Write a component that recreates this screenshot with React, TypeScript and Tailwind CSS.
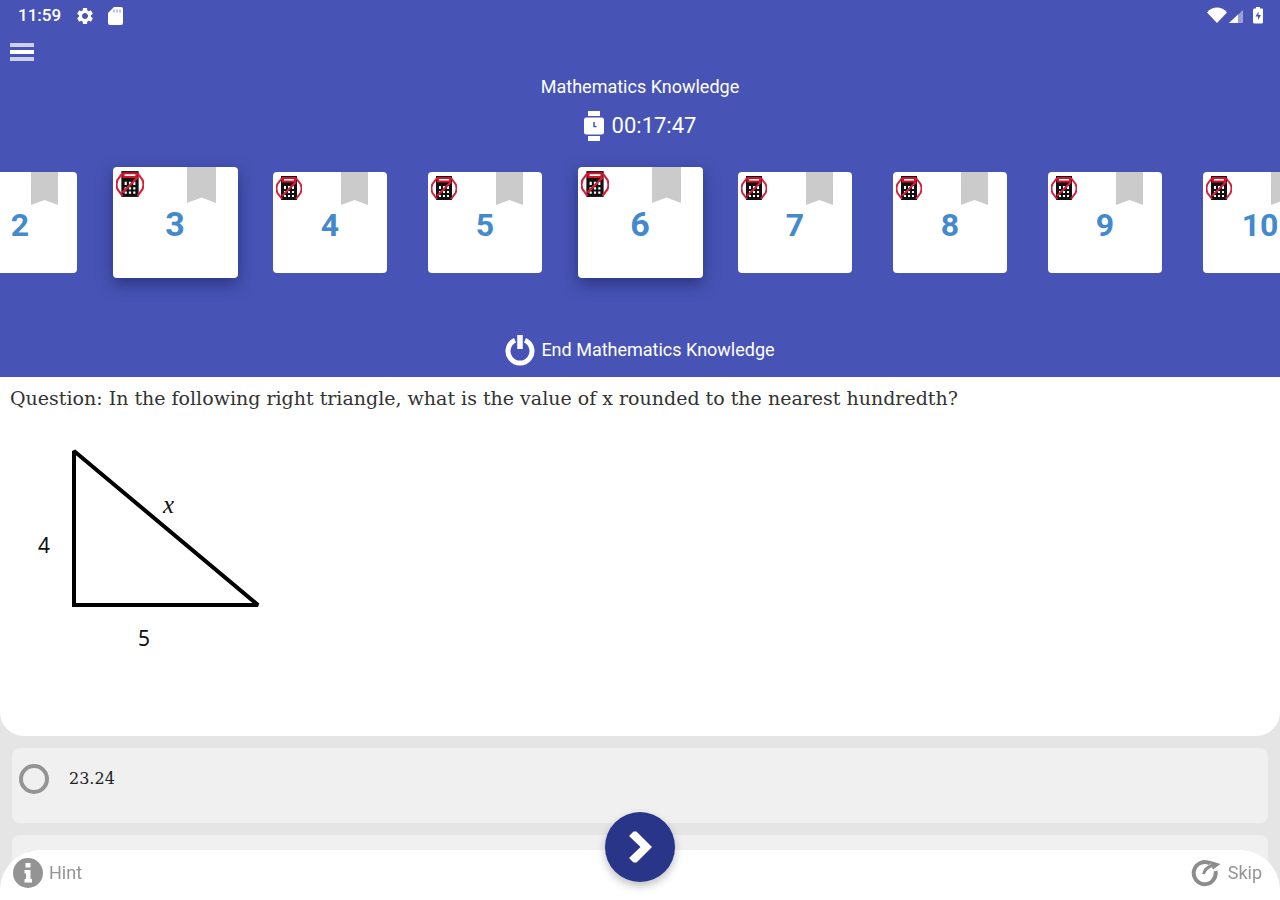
import { useState } from "react";
import clsx from "clsx";

const QUESTIONS = [2, 3, 4, 5, 6, 7, 8, 9, 10];
const RAISED = [3, 6];

const ANSWERS = [
  { id: "a", label: "23.24", visible: true },
  { id: "b", label: "6.40", visible: false },
];

function StatusIcons() {
  return (
    <svg width="56" height="20" viewBox="0 0 56 20" fill="#fff" aria-hidden="true">
      <path d="M0 6.500C5-.2 15-.2 20 6.500L10 17Z" />
      <path d="M22 17 36 4V17Z" opacity=".45" />
      <path d="M22 17 31 8.500V17Z" />
      <path
        fillRule="evenodd"
        d="M49 1h4v1.500h2q1.500 0 1 1.500v12q0 1.500-1.500 1.500h-7q-1.500 0-1.500-1.500v-12q0-1.500 1.500-1.500H49ZM51.500 5.500 48.500 10.500H51V14l3-5H51.500Z"
      />
    </svg>
  );
}

function SettingsIcon() {
  return (
    <svg width="20" height="20" viewBox="0 0 24 24" fill="#fff" aria-hidden="true">
      <path d="M19.140 12.940c.04-.3.06-.61.06-.94 0-.32-.02-.64-.07-.94l2.030-1.580c.18-.14.23-.41.12-.61l-1.920-3.320c-.12-.22-.37-.29-.59-.22l-2.390.96c-.5-.38-1.030-.7-1.620-.94l-.36-2.540c-.04-.24-.24-.41-.48-.41h-3.840c-.24 0-.43.17-.47.41l-.36 2.540c-.59.24-1.130.57-1.620.94l-2.390-.96c-.22-.08-.47 0-.59.22L2.740 8.870c-.12.21-.08.47.12.61l2.030 1.580c-.05.3-.09.63-.09.94s.02.64.07.94l-2.030 1.580c-.18.14-.23.41-.12.61l1.920 3.320c.12.22.37.29.59.22l2.390-.96c.5.38 1.030.7 1.620.94l.36 2.540c.05.24.24.41.48.41h3.840c.24 0 .44-.17.47-.41l.36-2.540c.59-.24 1.130-.56 1.620-.94l2.390.96c.22.08.47 0 .59-.22l1.920-3.320c.12-.22.07-.47-.12-.61l-2.010-1.580ZM12 15.600c-1.980 0-3.600-1.620-3.600-3.600s1.620-3.600 3.600-3.600 3.600 1.620 3.600 3.600-1.620 3.600-3.600 3.600Z" />
    </svg>
  );
}

function SdCardIcon() {
  return (
    <svg width="16" height="20" viewBox="0 0 16 20" aria-hidden="true">
      <path d="M6 1h7q2 0 2 2v14q0 2-2 2H2q-2 0-2-2V7Z" fill="#fff" />
      <path d="M6 3.500v3M9 3.500v3M12 3.500v3" stroke="#a9afdd" strokeWidth="1.500" />
    </svg>
  );
}

function WatchIcon() {
  return (
    <svg width="20" height="30" viewBox="0 0 20 30" aria-hidden="true">
      <path d="M4 0h12v5H4ZM4 25h12v5H4Z" fill="#fff" />
      <rect x="0" y="6.500" width="20" height="17" rx="2.500" fill="#fff" />
      <path d="M10 11v4.500h2.500" fill="none" stroke="#4754b5" strokeWidth="1.500" />
    </svg>
  );
}

function PowerIcon() {
  return (
    <svg width="30" height="32" viewBox="0 0 30 32" fill="none" stroke="#fff" aria-hidden="true">
      <path d="M10 6.200A12 12 0 1 0 20 6.200" strokeWidth="5" />
      <path d="M15 1v14" strokeWidth="5.500" />
    </svg>
  );
}

function NoCalculatorIcon({ className }: { className: string }) {
  return (
    <svg className={className} viewBox="0 0 26 26" aria-hidden="true">
      <path d="M5 1h16v24H5Z" fill="#111" />
      <path d="M7 3h12v3.500H7Z" fill="#fff" stroke="#d4142c" strokeWidth="2" />
      <path
        d="M8 11h2v3H8ZM12 11h2v3h-2ZM16 11h2v3h-2ZM8 16h2v2H8ZM12 16h2v2h-2ZM16 16h2v2h-2ZM8 20h2v2H8ZM12 20h2v2h-2ZM16 20h2v2h-2Z"
        fill="#fff"
      />
      <path
        d="M6 3 1.500 9Q-.5 13.500 1.500 18L6 24M20 3 24.500 9Q26.500 13.500 24.500 18L20 24M20 7 6 21"
        fill="none"
        stroke="#d4203a"
        strokeWidth="2"
      />
    </svg>
  );
}

function Ribbon({ className }: { className: string }) {
  return (
    <svg className={className} viewBox="0 0 27 33" preserveAspectRatio="none" aria-hidden="true">
      <path d="M0 0h27v33L13.500 28 0 33Z" fill="#cbcbcb" />
    </svg>
  );
}

function QuestionCard({ number, raised }: { number: number; raised: boolean }) {
  return (
    <li className="flex w-[155px] shrink-0 items-center justify-center">
      <button
        type="button"
        className={clsx(
          "relative flex items-center justify-center rounded-[4px] bg-white font-bold text-[#4489cd]",
          raised
            ? "h-[111px] w-[125px] text-[34px] shadow-[0_6px_16px_rgba(20,25,90,0.55)]"
            : "h-[101px] w-[114px] text-[32px]",
        )}
      >
        <NoCalculatorIcon
          className={clsx("absolute top-[3px] left-[3px]", raised ? "size-7" : "size-[26px]")}
        />
        <Ribbon
          className={clsx(
            "absolute top-0",
            raised ? "right-[22px] h-9 w-[29px]" : "right-[19px] h-[33px] w-[27px]",
          )}
        />
        <span className="mt-1">{number}</span>
      </button>
    </li>
  );
}

function Triangle() {
  return (
    <svg
      width="280"
      height="240"
      viewBox="0 0 280 240"
      role="img"
      aria-label="Right triangle with legs 4 and 5 and hypotenuse x"
      className="font-['Noto_Sans']"
    >
      <path d="M64 23V177H248Z" fill="none" stroke="#000" strokeWidth="4" strokeLinejoin="miter" strokeMiterlimit="1.500" />
      <text x="28" y="125" fontSize="21" fill="#111">4</text>
      <text x="128" y="218" fontSize="21" fill="#111">5</text>
      <text x="153" y="85" fontSize="25" fill="#111" fontStyle="italic" fontFamily="Liberation Serif, serif">x</text>
    </svg>
  );
}

export default function App() {
  const [answer, setAnswer] = useState<string | null>(null);

  return (
    <div className="flex h-screen flex-col overflow-hidden bg-[#e5e5e5] font-['Roboto',sans-serif]">
      <header className="bg-[#4754b5] text-white">
        <div className="flex h-8 items-center justify-between pr-[17px] pl-[18px]">
          <div className="flex items-center">
            <span className="text-[17px] font-medium">11:59</span>
            <span className="ml-[14px] flex items-center gap-[13px]">
              <SettingsIcon />
              <SdCardIcon />
            </span>
          </div>
          <StatusIcons />
        </div>

        <button type="button" aria-label="Menu" className="mx-[10px] mt-[11px] mb-[14px] flex flex-col gap-[3px]">
          <span className="h-1 w-6 bg-[#cdd0eb]" />
          <span className="h-1 w-6 bg-white" />
          <span className="h-1 w-6 bg-[#cdd0eb]" />
        </button>

        <div className="flex flex-col items-center">
          <h1 className="text-[18px] leading-6">Mathematics Knowledge</h1>
          <p className="mt-3 flex items-center gap-2 text-[22px] leading-[30px]">
            <WatchIcon />
            00:17:47
          </p>
        </div>

        <div className="h-[172px] overflow-hidden pt-[26px]">
          <ul className="flex h-[111px] justify-center">
            {QUESTIONS.map((n) => (
              <QuestionCard key={n} number={n} raised={RAISED.includes(n)} />
            ))}
          </ul>
        </div>

        <div className="flex justify-center pt-[21px] pb-[11px]">
          <button type="button" className="flex items-center gap-[6px] text-[18px] leading-8">
            <PowerIcon />
            End Mathematics Knowledge
          </button>
        </div>
      </header>

      <section className="rounded-b-[24px] bg-white px-[10px] pt-[7px] pb-[68px]">
        <h2 className="font-['DejaVu_Serif',serif] text-[19px] leading-7 text-[#333]">
          Question: In the following right triangle, what is the value of x rounded to the nearest
          hundredth?
        </h2>
        <div className="pt-4">
          <Triangle />
        </div>
      </section>

      <form className="flex flex-1 flex-col gap-3 overflow-hidden px-3 pt-3">
        {ANSWERS.map((a) => (
          <label
            key={a.id}
            className="flex h-[75px] shrink-0 items-start gap-5 rounded-lg bg-[#f0f0f0] px-[7px] pt-4"
          >
            <input
              type="radio"
              name="answer"
              aria-label={a.label}
              checked={answer === a.id}
              onChange={() => setAnswer(a.id)}
              className="size-[30px] appearance-none rounded-full border-4 border-[#949494] checked:bg-[#283588]"
            />
            {a.visible && (
              <span className="font-['DejaVu_Serif',serif] text-[16px] leading-[30px] text-[#222]">
                {a.label}
              </span>
            )}
          </label>
        ))}
      </form>

      <footer className="fixed inset-x-0 bottom-0 flex h-[50px] items-center justify-between rounded-t-[40px] bg-white pr-[18px] pb-[5px] pl-[13px] text-[18px] text-[#949494]">
        <button type="button" className="flex items-center gap-[6px]">
          <svg width="30" height="30" viewBox="0 0 30 30" aria-hidden="true">
            <circle cx="15" cy="15" r="15" fill="#949494" />
            <path d="M12.500 5h5v4.500h-5ZM11.500 12H17.500v9h1.500v3.500h-7.500V21h1.500v-5.500h-1.500Z" fill="#fff" />
          </svg>
          Hint
        </button>
        <button
          type="button"
          aria-label="Next question"
          className="absolute bottom-[18px] left-1/2 flex size-[70px] -translate-x-1/2 items-center justify-center rounded-full bg-[#283588] shadow-[0_4px_8px_rgba(0,0,0,0.25)]"
        >
          <svg width="26" height="34" viewBox="0 0 26 34" fill="none" aria-hidden="true">
            <path d="M2 6 6.500 1.500H9.500L25 17 9.500 32.500H6.500L2 28 13.500 17Z" fill="#fff" />
          </svg>
        </button>
        <button type="button" className="flex items-center gap-[7px]">
          <svg width="30" height="28" viewBox="0 0 30 28" fill="none" stroke="#8c8c8c" aria-hidden="true">
            <path d="M19 4.500A11 11 0 1 0 24.500 12" strokeWidth="4" />
            <path d="M12.500 15Q14 9 21 6.500" strokeWidth="3" />
            <path d="M18 1.500 29.500 5 22 10.500Z" fill="#8c8c8c" stroke="none" />
          </svg>
          Skip
        </button>
      </footer>
    </div>
  );
}
